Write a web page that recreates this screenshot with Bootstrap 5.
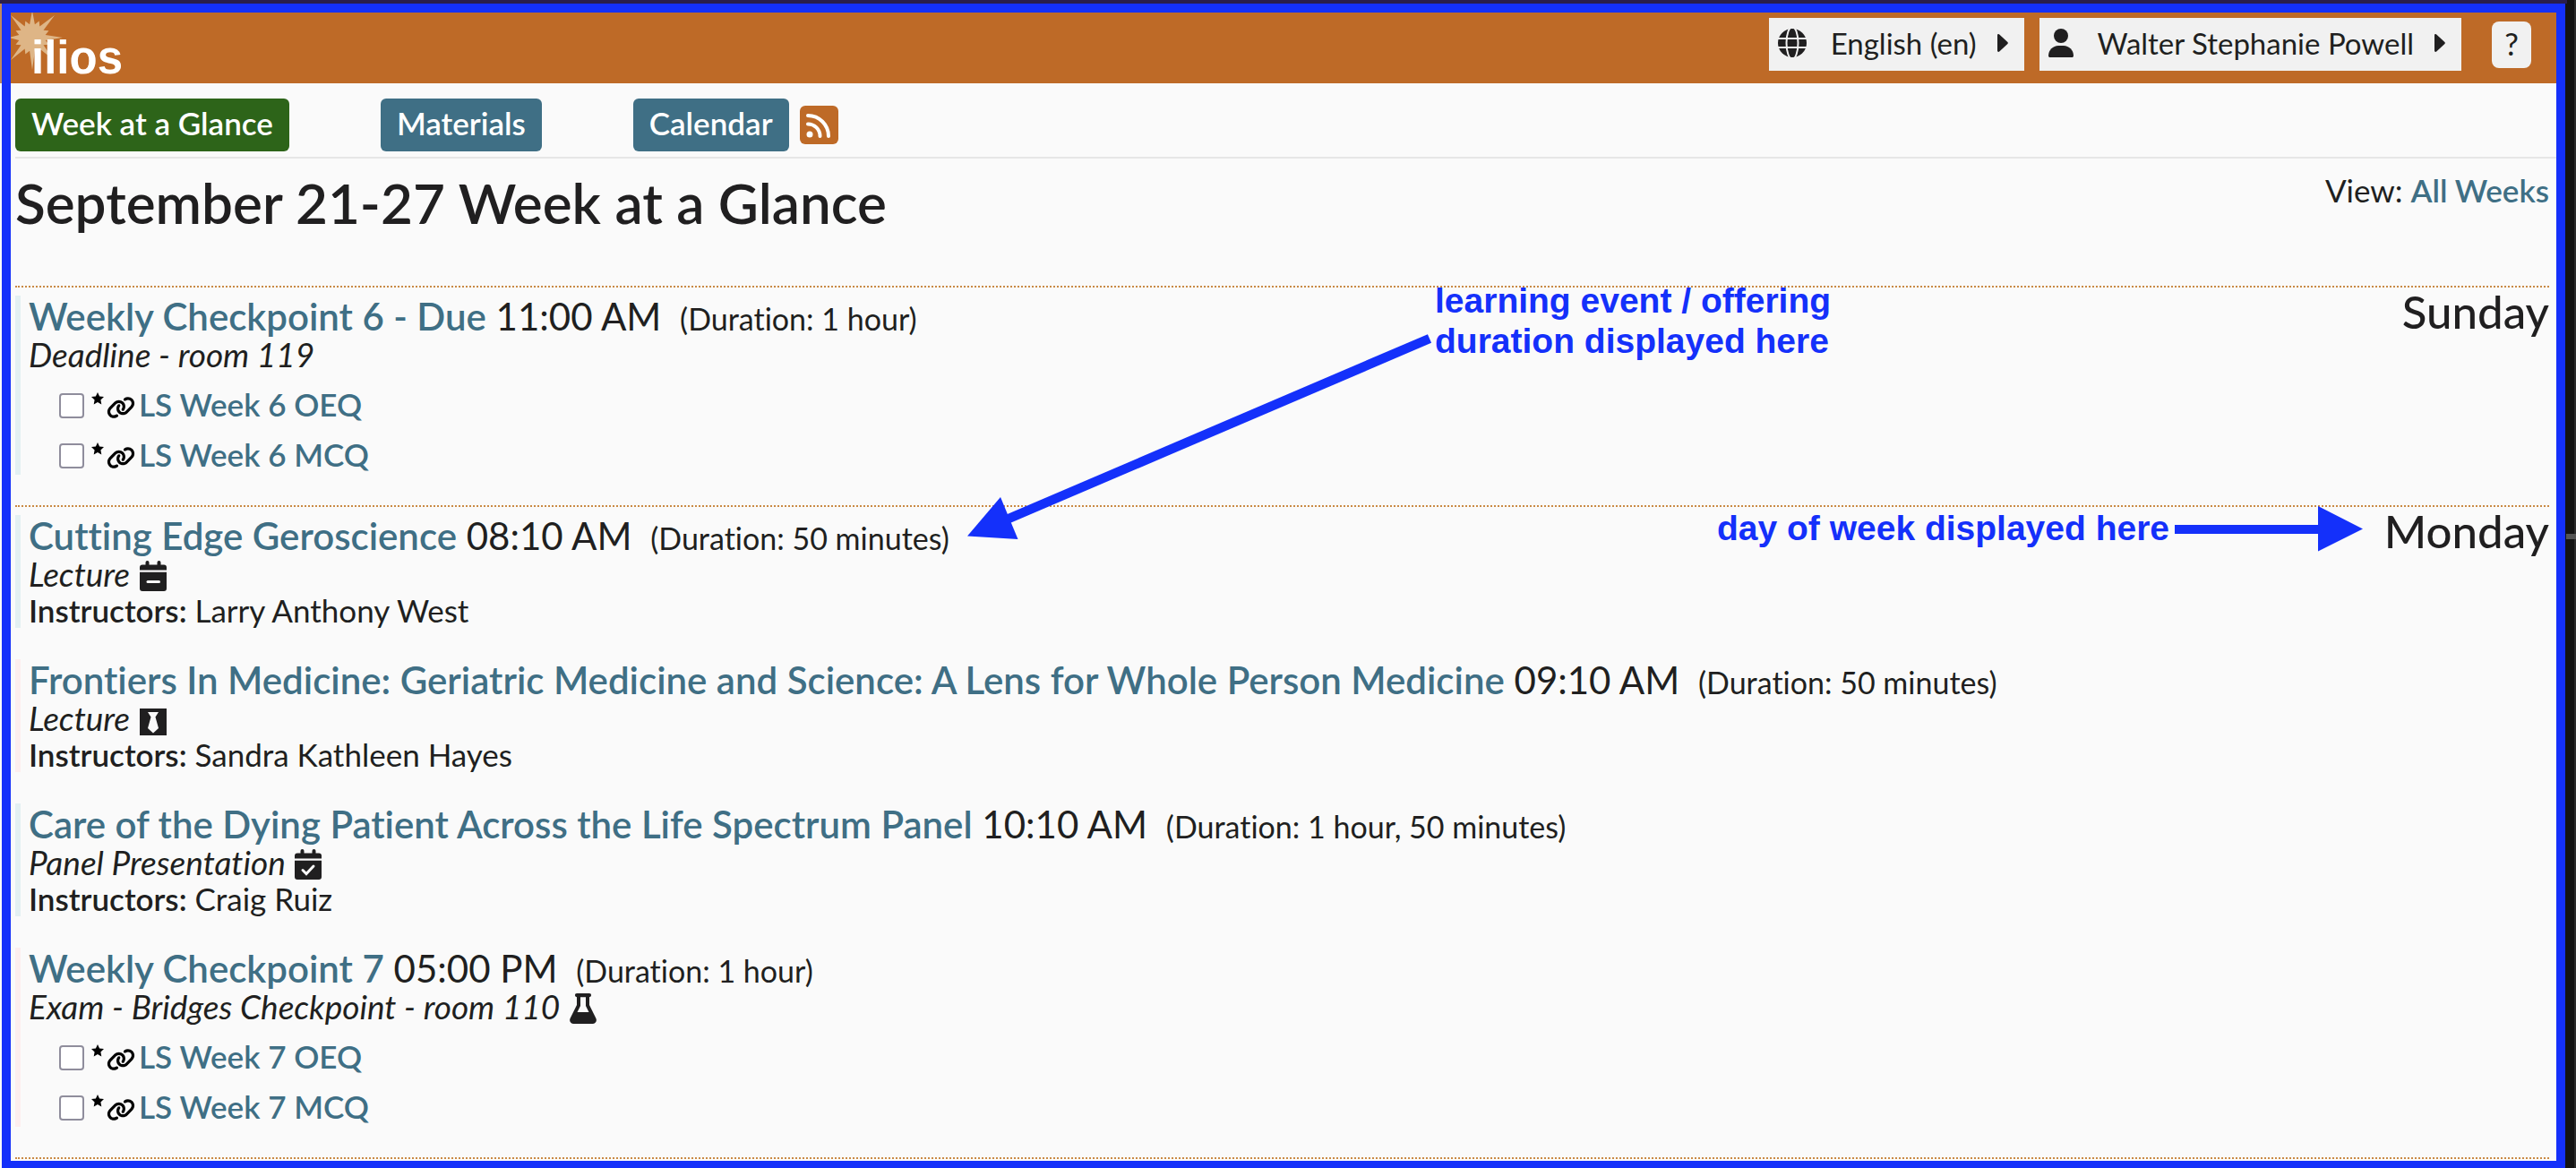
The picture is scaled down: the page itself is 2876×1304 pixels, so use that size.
<!DOCTYPE html>
<html lang="en">
<head>
<meta charset="utf-8">
<meta name="viewport" content="width=device-width, initial-scale=1">
<title>Ilios - Week at a Glance</title>
<link href="https://cdn.jsdelivr.net/npm/bootstrap@5.3.0/dist/css/bootstrap.min.css" rel="stylesheet">
<style>
  :root { --teal: #3f6f85; --orange: #be6a27; --ink: #201f20; --note: #1430fa; }
  body { font-family: Lato, "Open Sans", sans-serif; font-size: 35px; line-height: 40px; font-variant-ligatures: none; color: var(--ink); background: #141414; min-height: 100vh; padding: 4px 12px 0 2px; }
  .desk-top { height: 4px; background: #2a1e4c; right: 10px; }
  .desk-left { width: 2px; top: 4px; bottom: 0; background: linear-gradient(#c08a5e 89px, #fafafa 89px); }
  .desk-right { width: 2px; top: 0; bottom: 0; background: #2c2c2c; }
  .desk-tick { width: 11px; height: 6px; top: 596px; background: #555; }
  .app-frame { border: 10px solid var(--note); background: #fafafa; }
  a { color: var(--teal); text-decoration: none; }
  .app-header { background: var(--orange); height: 79px; padding: 6px 28px 0 0; }
  .logo-art { margin-top: -6px; display: block; }
  .logo-art text { font: bold 51px "Liberation Sans", sans-serif; }
  .top-menu { background: #f1f1f1; border: 0; border-radius: 0; height: 59px; padding: 0 18px 4px 10px; font-size: 33px; line-height: 40px; color: var(--ink); }
  .top-menu .menu-text { margin: 0 23px 0 27px; }
  .help-btn { background: #f1f1f1; width: 44px; height: 52px; margin-left: 17px; border: 0; border-radius: 8px; padding: 0 0 3px; font-size: 35px; line-height: 40px; color: var(--ink); }
  .menus { gap: 17px; }
  .dash-nav { padding: 17px 0 6px; margin-left: 5px; border-bottom: 2px solid #e6e6e6; gap: 102px; }
  .dash-btn { background: var(--teal); color: #fff; font-size: 35px; font-weight: 600; line-height: 55px; padding: 0 18px 4px; border: 0; border-radius: 6px; }
  .dash-btn:hover { color: #fff; background: #345c6e; }
  .dash-btn.active-view { background: #2d6419; }
  .feed { background: var(--orange); width: 43px; height: 43px; border-radius: 6px; margin-left: 12px; }
  .week { padding: 12px 8px 2px 5px; }
  .week-title { font-size: 62px; line-height: 74px; font-weight: 600; }
  .week-head { margin-bottom: 56px; }
  .week-view { margin-top: 2px; line-height: 42px; }
  .week-view a, .materials a { font-weight: 600; }
  .day { border-top: 2px dotted #c98a45; }
  .day-name { font-size: 51px; line-height: 54px; font-weight: 500; }
  .events { padding-top: 9px; }
  .event { border-left: 6px solid #e3f0f2; padding-left: 9px; margin-bottom: 34px; }
  .event + .event { margin-top: 35px; }
  .event:not(:last-child) { margin-bottom: 0; }
  .event.alt { border-left-color: #fdeeee; }
  .event-title { font-size: 42px; line-height: 46px; font-weight: 400; }
  .event-title a { font-weight: 600; }
  .event-title span { font-size: 34px; line-height: 34px; margin-left: 10px; }
  .kind { font-style: italic; font-size: 37px; }
  .kind svg { vertical-align: -5px; margin-left: 2px; }
  .who b { font-weight: 600; }
  .materials { margin-top: 12px; padding-left: 34px; gap: 10px; }
  .materials li { line-height: 46px; height: 46px; }
  .done-box { appearance: none; width: 28px; height: 28px; margin: 4px 8px 0 0; border: 2px solid #8f8d9c; border-radius: 4px; background: #fff; }
  .star { margin: 0 3px 12px 0; }
  .chain { margin: 8px 4px 0 0; }
  .note { color: var(--note); font: bold 39px/45px "Liberation Sans", Arial, sans-serif; white-space: nowrap; }
  .note-duration { left: 1602px; top: 313px; }
  .note-day { left: 1917px; top: 567px; }
</style>
<script src="https://cdn.jsdelivr.net/npm/bootstrap@5.3.0/dist/js/bootstrap.bundle.min.js"></script>
</head>
<body class="position-relative overflow-hidden">
<svg class="d-none">
  <symbol id="i-star" viewBox="0 0 14 14"><path d="M7 0l2.100 4.500 4.900.6-3.600 3.400.9 5L7 11.100 2.700 13.500l.9-5L0 5.100l4.900-.6z"/></symbol>
  <symbol id="i-chain" viewBox="0 0 640 512"><path d="M579.800 267.700c56.500-56.500 56.500-148 0-204.500c-50-50-128.800-56.500-186.300-15.400l-1.600 1.100c-14.400 10.300-17.700 30.300-7.400 44.600s30.300 17.700 44.600 7.400l1.600-1.100c32.100-22.900 76-19.300 103.800 8.600c31.500 31.500 31.500 82.500 0 114L422.300 334.800c-31.500 31.500-82.500 31.500-114 0c-27.900-27.900-31.500-71.800-8.600-103.800l1.100-1.600c10.300-14.400 6.900-34.400-7.400-44.600s-34.400-6.900-44.600 7.400l-1.100 1.600C206.500 251.200 213 330 263 380c56.500 56.500 148 56.500 204.500 0L579.800 267.700zM60.200 244.300c-56.500 56.500-56.500 148 0 204.500c50 50 128.800 56.500 186.300 15.400l1.600-1.100c14.400-10.300 17.700-30.300 7.400-44.600s-30.300-17.700-44.600-7.400l-1.600 1.100c-32.100 22.900-76 19.300-103.800-8.600C74 372 74 321 105.500 289.500L217.700 177.200c31.500-31.500 82.500-31.500 114 0c27.900 27.900 31.500 71.800 8.600 103.900l-1.100 1.600c-10.300 14.400-6.900 34.400 7.400 44.600s34.400 6.900 44.600-7.400l1.100-1.600C433.500 260.800 427 182 377 132c-56.500-56.500-148-56.500-204.500 0L60.200 244.300z"/></symbol>
</svg>
<div class="desk-top position-absolute top-0 start-0"></div>
<div class="desk-left position-absolute start-0"></div>
<div class="desk-right position-absolute end-0"></div>
<div class="desk-tick position-absolute end-0"></div>

<div class="app-frame">
  <header class="app-header d-flex justify-content-between align-items-start">
    <a href="#" aria-label="ilios">
      <svg class="logo-art" width="140" height="79" viewBox="12 14 140 79">
        <path transform="translate(36 42)" fill="#deb586" d="M34 0L14.700 2.900 18.500 7.700 12.500 8.300 24 25 8.300 12.500 7.700 18.500 2.900 14.700 0 36-2.900 14.700-7.700 18.500-8.300 12.500-24 25-12.500 8.300-18.500 7.700-14.700 2.900-26 0-14.700-2.900-18.500-7.700-12.500-8.300-24-25-8.300-12.500-7.700-18.500-2.900-14.700 0-30 2.900-14.700 7.700-18.500 8.300-12.500 25-25 12.500-8.300 18.500-7.700 14.700-2.900z"/>
        <text x="35" y="82" fill="#fff">ilios</text>
      </svg>
    </a>
    <div class="menus d-flex align-items-center">
      <button class="top-menu d-flex align-items-center" type="button">
        <svg width="32" height="32" viewBox="0 0 32 32"><circle cx="16" cy="16" r="16" fill="#201f20"/><g fill="none" stroke="#f1f1f1" stroke-width="2"><path d="M0 11h32M0 21h32"/><ellipse cx="16" cy="16" rx="6.500" ry="18"/></g></svg>
        <span class="menu-text">English (en)</span>
        <svg width="12" height="20" viewBox="0 0 12 20"><path d="M0 1.500C0 0 1.500-.3 2.500.7L11.400 9a1.500 1.500 0 010 2L2.500 19.300C1.500 20.300 0 20 0 18.500z" fill="#201f20"/></svg>
      </button>
      <button class="top-menu d-flex align-items-center" type="button">
        <svg width="28" height="32" viewBox="0 0 28 32"><circle cx="14" cy="8" r="8" fill="#201f20"/><path d="M0 30.200C0 24 5 19 11.100 19h5.800C23 19 28 24 28 30.200c0 1-.8 1.800-1.800 1.800H1.800C.8 32 0 31.200 0 30.200z" fill="#201f20"/></svg>
        <span class="menu-text">Walter Stephanie Powell</span>
        <svg width="12" height="20" viewBox="0 0 12 20"><path d="M0 1.500C0 0 1.500-.3 2.500.7L11.400 9a1.500 1.500 0 010 2L2.500 19.300C1.500 20.300 0 20 0 18.500z" fill="#201f20"/></svg>
      </button>
      <button class="help-btn" type="button">?</button>
    </div>
  </header>

  <nav class="dash-nav d-flex align-items-center">
    <a class="dash-btn active-view" href="#">Week at a Glance</a>
    <a class="dash-btn" href="#">Materials</a>
    <div class="d-flex align-items-center">
      <a class="dash-btn" href="#">Calendar</a>
      <a class="feed d-flex align-items-center justify-content-center" href="#" aria-label="Calendar feed">
        <svg width="28" height="28" viewBox="0 0 28 28"><circle cx="4" cy="24" r="3.500" fill="#fff"/><path d="M2 12.500A13.500 13.500 0 0115.500 26M2 3a23 23 0 0123 23" fill="none" stroke="#fff" stroke-width="4" stroke-linecap="round"/></svg>
      </a>
    </div>
  </nav>

  <main class="week">
    <div class="week-head d-flex justify-content-between align-items-start">
      <h1 class="week-title mb-0">September 21-27 Week at a Glance</h1>
      <div class="week-view">View: <a href="#">All Weeks</a></div>
    </div>

    <section class="day d-flex justify-content-between align-items-start">
      <div class="events">
        <article class="event">
          <h3 class="event-title mb-0"><a href="#">Weekly Checkpoint 6 - Due</a> 11:00 AM <span>(Duration: 1 hour)</span></h3>
          <div class="kind">Deadline - room 119</div>
          <ul class="materials list-unstyled mb-0 d-flex flex-column">
            <li class="d-flex align-items-center"><input class="done-box" type="checkbox" aria-label="LS Week 6 OEQ"><svg class="star" width="14" height="14"><use href="#i-star"/></svg><svg class="chain" width="32" height="26"><use href="#i-chain"/></svg><a href="#">LS Week 6 OEQ</a></li>
            <li class="d-flex align-items-center"><input class="done-box" type="checkbox" aria-label="LS Week 6 MCQ"><svg class="star" width="14" height="14"><use href="#i-star"/></svg><svg class="chain" width="32" height="26"><use href="#i-chain"/></svg><a href="#">LS Week 6 MCQ</a></li>
          </ul>
        </article>
      </div>
      <h2 class="day-name mb-0">Sunday</h2>
    </section>

    <section class="day d-flex justify-content-between align-items-start">
      <div class="events">
        <article class="event">
          <h3 class="event-title mb-0"><a href="#">Cutting Edge Geroscience</a> 08:10 AM <span>(Duration: 50 minutes)</span></h3>
          <div class="kind">Lecture <svg width="30" height="34" viewBox="0 0 30 34"><path fill="#201f20" d="M0 10.600V7.500a3 3 0 013-3h3.500V2a2 2 0 014 0v2.500h9V2a2 2 0 014 0v2.500H27a3 3 0 013 3v3.100zM0 12.700h30V31a3 3 0 01-3 3H3a3 3 0 01-3-3z"/><path d="M9 23.500h12.500" stroke="#fafafa" stroke-width="3" stroke-linecap="round"/></svg></div>
          <div class="who"><b>Instructors:</b> Larry Anthony West</div>
        </article>
        <article class="event alt">
          <h3 class="event-title mb-0"><a href="#">Frontiers In Medicine: Geriatric Medicine and Science: A Lens for Whole Person Medicine</a> 09:10 AM <span>(Duration: 50 minutes)</span></h3>
          <div class="kind">Lecture <svg width="30" height="30" viewBox="0 0 30 30"><path fill="#201f20" d="M0 0h30v30H0z"/><path fill="#fafafa" d="M9 4h12l-3.500 5.500L21 22l-6 5.500L9 22l3.500-12.500z"/></svg></div>
          <div class="who"><b>Instructors:</b> Sandra Kathleen Hayes</div>
        </article>
        <article class="event">
          <h3 class="event-title mb-0"><a href="#">Care of the Dying Patient Across the Life Spectrum Panel</a> 10:10 AM <span>(Duration: 1 hour, 50 minutes)</span></h3>
          <div class="kind">Panel Presentation <svg width="30" height="34" viewBox="0 0 30 34"><path fill="#201f20" d="M0 10.600V7.500a3 3 0 013-3h3.500V2a2 2 0 014 0v2.500h9V2a2 2 0 014 0v2.500H27a3 3 0 013 3v3.100zM0 12.700h30V31a3 3 0 01-3 3H3a3 3 0 01-3-3z"/><path d="M9 23.500l4 4 8-8.500" fill="none" stroke="#fafafa" stroke-width="3" stroke-linecap="round"/></svg></div>
          <div class="who"><b>Instructors:</b> Craig Ruiz</div>
        </article>
        <article class="event alt">
          <h3 class="event-title mb-0"><a href="#">Weekly Checkpoint 7</a> 05:00 PM <span>(Duration: 1 hour)</span></h3>
          <div class="kind">Exam - Bridges Checkpoint - room 110 <svg width="30" height="34" viewBox="0 0 30 34"><path fill="#201f20" fill-rule="evenodd" d="M8 0h14a2 2 0 010 4.200v8.800l7.200 14.500C31 31 29 34 25.500 34h-21C1 34-1 31 .8 27.500L8 13V4.200A2 2 0 018 0zM12 4.200V14l-3.500 7h13L18 14V4.200z"/></svg></div>
          <ul class="materials list-unstyled mb-0 d-flex flex-column">
            <li class="d-flex align-items-center"><input class="done-box" type="checkbox" aria-label="LS Week 7 OEQ"><svg class="star" width="14" height="14"><use href="#i-star"/></svg><svg class="chain" width="32" height="26"><use href="#i-chain"/></svg><a href="#">LS Week 7 OEQ</a></li>
            <li class="d-flex align-items-center"><input class="done-box" type="checkbox" aria-label="LS Week 7 MCQ"><svg class="star" width="14" height="14"><use href="#i-star"/></svg><svg class="chain" width="32" height="26"><use href="#i-chain"/></svg><a href="#">LS Week 7 MCQ</a></li>
          </ul>
        </article>
      </div>
      <h2 class="day-name mb-0">Monday</h2>
    </section>
    <div class="day"></div>
  </main>
</div>

<!-- callouts drawn over the page -->
<svg class="position-absolute top-0 start-0 pe-none" width="2700" height="640" fill="#1430fa">
  <path d="M1125 579.500L1596 378" stroke="#1430fa" stroke-width="10.500"/>
  <path d="M1080 598.500L1117 555l19.500 47z"/>
  <path d="M2428 586h160v-21l50 25.500-50 25v-19.500h-160z"/>
</svg>
<div class="note note-duration position-absolute">learning event / offering<br>duration displayed here</div>
<div class="note note-day position-absolute">day of week displayed here</div>
</body>
</html>
